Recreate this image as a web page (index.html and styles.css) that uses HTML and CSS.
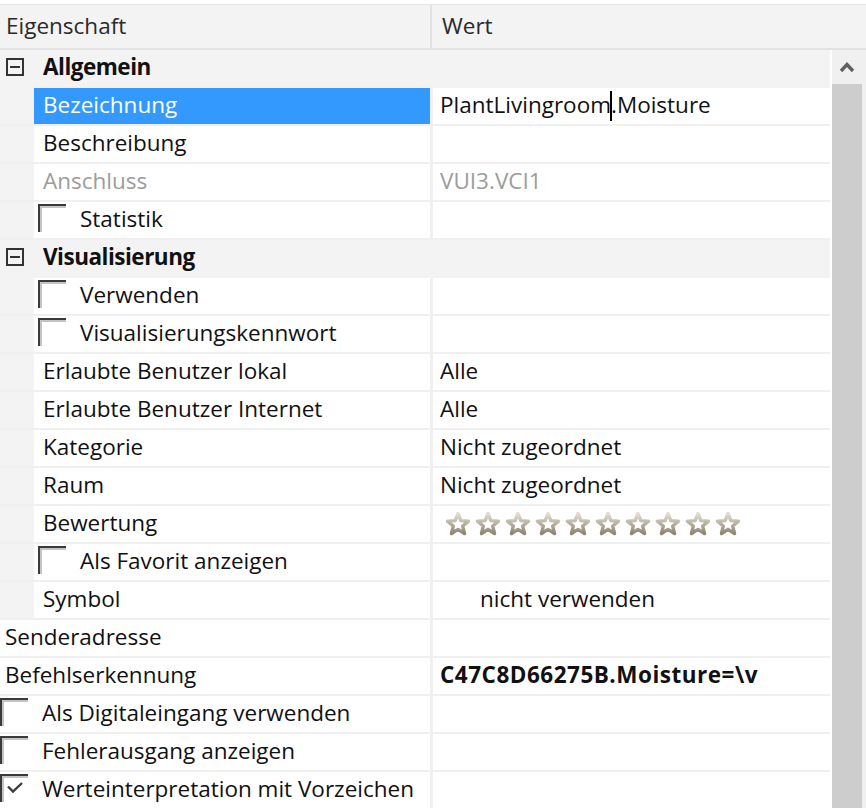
FILE: index.html
```html
<!DOCTYPE html>
<html lang="de">
<head>
<meta charset="utf-8">
<title>Eigenschaften</title>
<link rel="stylesheet" href="styles.css">
</head>
<body>
<svg class="defs" width="0" height="0" aria-hidden="true">
  <defs>
    <linearGradient id="sg" x1="0" y1="0" x2="0" y2="1">
      <stop offset="0" stop-color="#e2dfd2"/>
      <stop offset="1" stop-color="#8f8572"/>
    </linearGradient>
    <polygon id="star" points="12,1.5 14.9,8.6 22.5,9.1 16.7,14 18.5,21.5 12,17.4 5.5,21.5 7.3,14 1.5,9.1 9.1,8.6" fill="#fff" stroke="url(#sg)" stroke-width="3.4" stroke-linejoin="round"/>
  </defs>
</svg>
<div class="grid">
  <div class="header">
    <div class="h-name">Eigenschaft</div>
    <div class="h-val">Wert</div>
  </div>
  <div class="body">
    <div class="rows">
      <div class="row cat">
        <div class="indent"><span class="toggle"></span></div>
        <div class="cat-label">Allgemein</div>
      </div>
      <div class="row">
        <div class="indent"></div>
        <div class="name selected">Bezeichnung</div>
        <div class="val">PlantLivingroom<span class="caret"></span>.Moisture</div>
      </div>
      <div class="row">
        <div class="indent"></div>
        <div class="name">Beschreibung</div>
        <div class="val"></div>
      </div>
      <div class="row disabled">
        <div class="indent"></div>
        <div class="name">Anschluss</div>
        <div class="val">VUI3.VCI1</div>
      </div>
      <div class="row">
        <div class="indent"></div>
        <div class="name"><span class="cb"></span>Statistik</div>
        <div class="val"></div>
      </div>
      <div class="row cat">
        <div class="indent"><span class="toggle"></span></div>
        <div class="cat-label">Visualisierung</div>
      </div>
      <div class="row">
        <div class="indent"></div>
        <div class="name"><span class="cb"></span>Verwenden</div>
        <div class="val"></div>
      </div>
      <div class="row">
        <div class="indent"></div>
        <div class="name"><span class="cb"></span>Visualisierungskennwort</div>
        <div class="val"></div>
      </div>
      <div class="row">
        <div class="indent"></div>
        <div class="name">Erlaubte Benutzer lokal</div>
        <div class="val">Alle</div>
      </div>
      <div class="row">
        <div class="indent"></div>
        <div class="name">Erlaubte Benutzer Internet</div>
        <div class="val">Alle</div>
      </div>
      <div class="row">
        <div class="indent"></div>
        <div class="name">Kategorie</div>
        <div class="val">Nicht zugeordnet</div>
      </div>
      <div class="row">
        <div class="indent"></div>
        <div class="name">Raum</div>
        <div class="val">Nicht zugeordnet</div>
      </div>
      <div class="row">
        <div class="indent"></div>
        <div class="name">Bewertung</div>
        <div class="val">
          <svg class="stars" width="296" height="24" viewBox="0 0 296 24">
            <use href="#star" x="0"/>
            <use href="#star" x="30"/>
            <use href="#star" x="60"/>
            <use href="#star" x="90"/>
            <use href="#star" x="120"/>
            <use href="#star" x="150"/>
            <use href="#star" x="180"/>
            <use href="#star" x="210"/>
            <use href="#star" x="240"/>
            <use href="#star" x="270"/>
          </svg>
        </div>
      </div>
      <div class="row">
        <div class="indent"></div>
        <div class="name"><span class="cb"></span>Als Favorit anzeigen</div>
        <div class="val"></div>
      </div>
      <div class="row">
        <div class="indent"></div>
        <div class="name">Symbol</div>
        <div class="val"><span class="sym">nicht verwenden</span></div>
      </div>
      <div class="row">
        <div class="name top">Senderadresse</div>
        <div class="val"></div>
      </div>
      <div class="row">
        <div class="name top">Befehlserkennung</div>
        <div class="val bold">C47C8D66275B.Moisture=\v</div>
      </div>
      <div class="row">
        <div class="name top"><span class="cb"></span>Als Digitaleingang verwenden</div>
        <div class="val"></div>
      </div>
      <div class="row">
        <div class="name top"><span class="cb"></span>Fehlerausgang anzeigen</div>
        <div class="val"></div>
      </div>
      <div class="row">
        <div class="name top"><span class="cb"><svg class="check" width="28" height="28" viewBox="0 0 28 28"><polyline points="8,12.5 13,17.5 22,9" fill="none" stroke="#3c3c3c" stroke-width="2.4"/></svg></span>Werteinterpretation mit Vorzeichen</div>
        <div class="val"></div>
      </div>
    </div>
    <div class="scrollbar">
      <div class="sb-arrow">
        <svg width="16" height="12" viewBox="0 0 16 12"><polyline points="2,10 8,3.5 14,10" fill="none" stroke="#606060" stroke-width="3.4"/></svg>
      </div>
      <div class="sb-thumb"></div>
    </div>
  </div>
</div>
</body>
</html>
```
FILE: styles.css
```css
* { box-sizing: border-box; }

html, body {
  margin: 0;
  padding: 0;
  background: #ffffff;
  overflow: hidden;
}

body {
  width: 866px;
  height: 808px;
  font-family: "Open Sans", "Noto Sans", sans-serif;
  font-size: 22.5px;
  color: #111;
}

.defs { position: absolute; }

.grid {
  padding-top: 4px;
  width: 866px;
}

.header {
  display: flex;
  height: 46px;
  background: #f3f3f3;
  border-top: 1px solid #e6e6e6;
  border-bottom: 2px solid #e3e3e3;
  color: #2a2a2a;
}

.h-name {
  width: 432px;
  padding-left: 6px;
  padding-bottom: 2px;
  display: flex;
  align-items: center;
  border-right: 2px solid #e2e2e2;
}

.h-val {
  flex: 1;
  padding-left: 10px;
  padding-bottom: 2px;
  display: flex;
  align-items: center;
}

.body {
  display: flex;
}

.rows {
  width: 830px;
}

.row {
  display: flex;
  height: 38px;
  border-bottom: 2px solid #f0f0f0;
  background: #fff;
}

.row.cat {
  background: #f3f3f3;
  border-bottom-color: #f3f3f3;
}

.indent {
  width: 34px;
  flex: none;
  background: #f3f3f3;
  display: flex;
  align-items: center;
  padding-left: 6px;
}

.toggle {
  display: block;
  width: 18px;
  height: 18px;
  border: 2px solid #333;
  position: relative;
  margin-top: -2px;
}

.toggle::after {
  content: "";
  position: absolute;
  left: 2px;
  right: 2px;
  top: 6px;
  height: 2px;
  background: #333;
}

.cat-label {
  font-weight: 700;
  letter-spacing: -0.5px;
  padding-left: 9px;
  padding-bottom: 3px;
  display: flex;
  align-items: center;
}

.name {
  width: 396px;
  flex: none;
  padding-left: 9px;
  padding-bottom: 3px;
  display: flex;
  align-items: center;
  white-space: nowrap;
}

.name.top {
  width: 430px;
  padding-left: 5px;
}

.name.selected {
  background: #3399ff;
  color: #fff;
}

.val {
  flex: 1;
  border-left: 3px solid #f0f0f0;
  padding-left: 7px;
  padding-bottom: 3px;
  display: flex;
  align-items: center;
  white-space: nowrap;
}

.val.bold {
  font-weight: 700;
  letter-spacing: 0.5px;
}

.disabled .name,
.disabled .val {
  color: #9c9c9c;
}

.caret {
  display: inline-block;
  width: 2px;
  height: 30px;
  background: #000;
  margin-right: -2px;
  position: relative;
  left: -1px;
  top: 1px;
}

.cb {
  display: inline-block;
  flex: none;
  width: 28px;
  height: 28px;
  align-self: flex-start;
  margin-top: 2px;
  margin-left: -5px;
  margin-right: 14px;
  border-top: 2px solid #3a3a3a;
  border-left: 2px solid #3a3a3a;
  box-shadow: inset 2px 2px 0 #c4c4c4;
  position: relative;
}

.check {
  position: absolute;
  left: -2px;
  top: -2px;
}

.stars {
  margin-left: 6px;
  margin-top: 3px;
  display: block;
}

.sym {
  padding-left: 40px;
}

.scrollbar {
  width: 34px;
  margin-left: 2px;
  background: #f0f0f0;
  display: flex;
  flex-direction: column;
  height: 758px;
}

.sb-arrow {
  height: 34px;
  display: flex;
  align-items: center;
  justify-content: center;
  padding-right: 4px;
}

.sb-thumb {
  flex: 1;
  width: 30px;
  background: #cdcdcd;
}
```
